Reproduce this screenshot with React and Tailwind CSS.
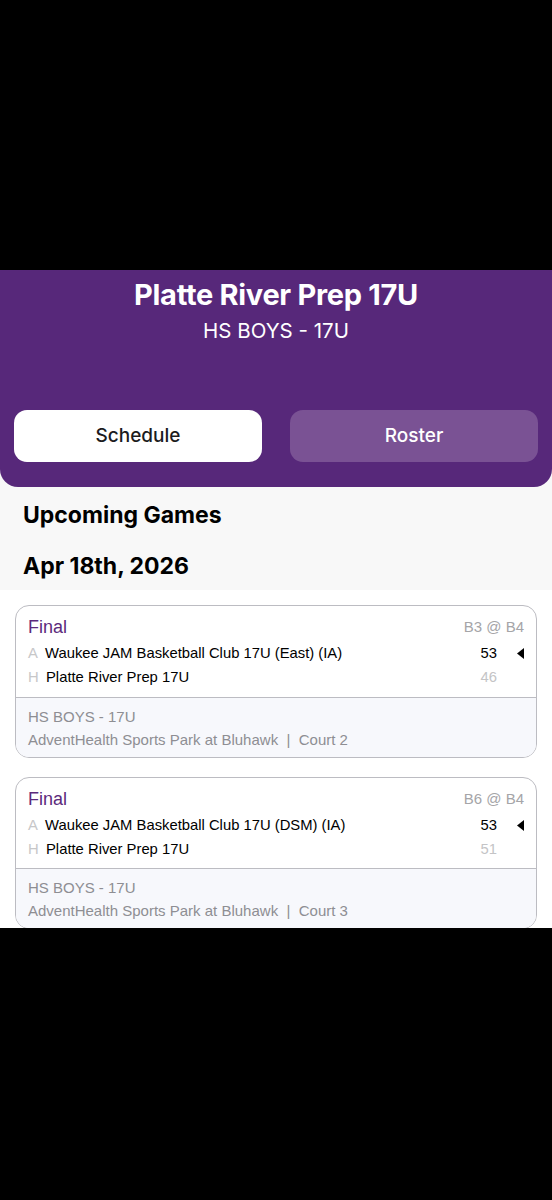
import React from "react";

const games = [
  { bracket: "B3 @ B4", away: "Waukee JAM Basketball Club 17U (East) (IA)", awayScore: 53, home: "Platte River Prep 17U", homeScore: 46, court: "Court 2" },
  { bracket: "B6 @ B4", away: "Waukee JAM Basketball Club 17U (DSM) (IA)", awayScore: 53, home: "Platte River Prep 17U", homeScore: 51, court: "Court 3" },
];

function GameCard({ game }) {
  return (
    <div className="mx-[15px] mb-[19px] rounded-[14px] border border-[#bcbcc2] overflow-hidden bg-white" style={{ fontFamily: '"Liberation Sans", Arial, sans-serif' }}>
      <div className="px-[12px] pt-[10px] pb-[8px]">
        <div className="flex items-center justify-between">
          <span className="text-[18px] text-[#5b2a7c] leading-[22px]">Final</span>
          <span className="text-[15px] text-[#a5a5a8]">{game.bracket}</span>
        </div>
        <div className="flex items-center mt-[4px] h-[22px] text-[14.8px]">
          <span className="w-[17px] text-[#c7c7c9]">A</span>
          <span className="flex-1 text-black">{game.away}</span>
          <span className="text-black w-[24px] text-right">{game.awayScore}</span>
          <span className="w-[27px] flex justify-end">
            <svg width="7" height="11" viewBox="0 0 7 11"><path d="M7 0 L0 5.5 L7 11 Z" fill="#000" /></svg>
          </span>
        </div>
        <div className="flex items-center mt-[2px] h-[22px] text-[14.8px]">
          <span className="w-[18px] text-[#c7c7c9]">H</span>
          <span className="flex-1 text-black">{game.home}</span>
          <span className="text-[#c4c4c6] w-[24px] text-right">{game.homeScore}</span>
          <span className="w-[27px]" />
        </div>
      </div>
      <div className="border-t border-[#bcbcc2] bg-[#f7f8fc] px-[12px] pt-[7px] pb-[6px] text-[15px] text-[#8e8e93] leading-[23px]">
        <div>HS BOYS - 17U</div>
        <div>AdventHealth Sports Park at Bluhawk&nbsp; |&nbsp; {game.court}</div>
      </div>
    </div>
  );
}

export default function App() {
  return (
    <div className="w-[552px] h-[1200px] bg-black flex flex-col" style={{ fontFamily: 'Inter, "Noto Sans", sans-serif' }}>
      <div className="h-[270px]" />
      <div className="bg-[#f8f8f8]">
        <div className="bg-[#57287a] rounded-b-[18px] h-[217px] px-[14px] pt-[6px] flex flex-col items-center">
          <h1 className="text-[29px] font-bold text-white leading-[38px] tracking-[-0.3px]">Platte River Prep 17U</h1>
          <div className="text-[20.5px] text-white mt-[4px] leading-[26px]">HS BOYS - 17U</div>
          <div className="flex w-full gap-[28px] mt-[66px]">
            <button className="flex-1 h-[52px] rounded-[13px] bg-white text-[#1c1c1e] text-[19px] font-medium">Schedule</button>
            <button className="flex-1 h-[52px] rounded-[13px] bg-[#7a5294] text-white text-[19px] font-medium">Roster</button>
          </div>
        </div>
        <div className="px-[23px] pt-[13px] pb-[9px]">
          <div className="text-[23px] font-bold text-black leading-[30px]">Upcoming Games</div>
          <div className="text-[23px] font-bold text-black leading-[30px] mt-[21px]">Apr 18th, 2026</div>
        </div>
      </div>
      <div className="bg-white pt-[15px] h-[338px] overflow-hidden">
        {games.map((g, i) => <GameCard key={i} game={g} />)}
      </div>
    </div>
  );
}
